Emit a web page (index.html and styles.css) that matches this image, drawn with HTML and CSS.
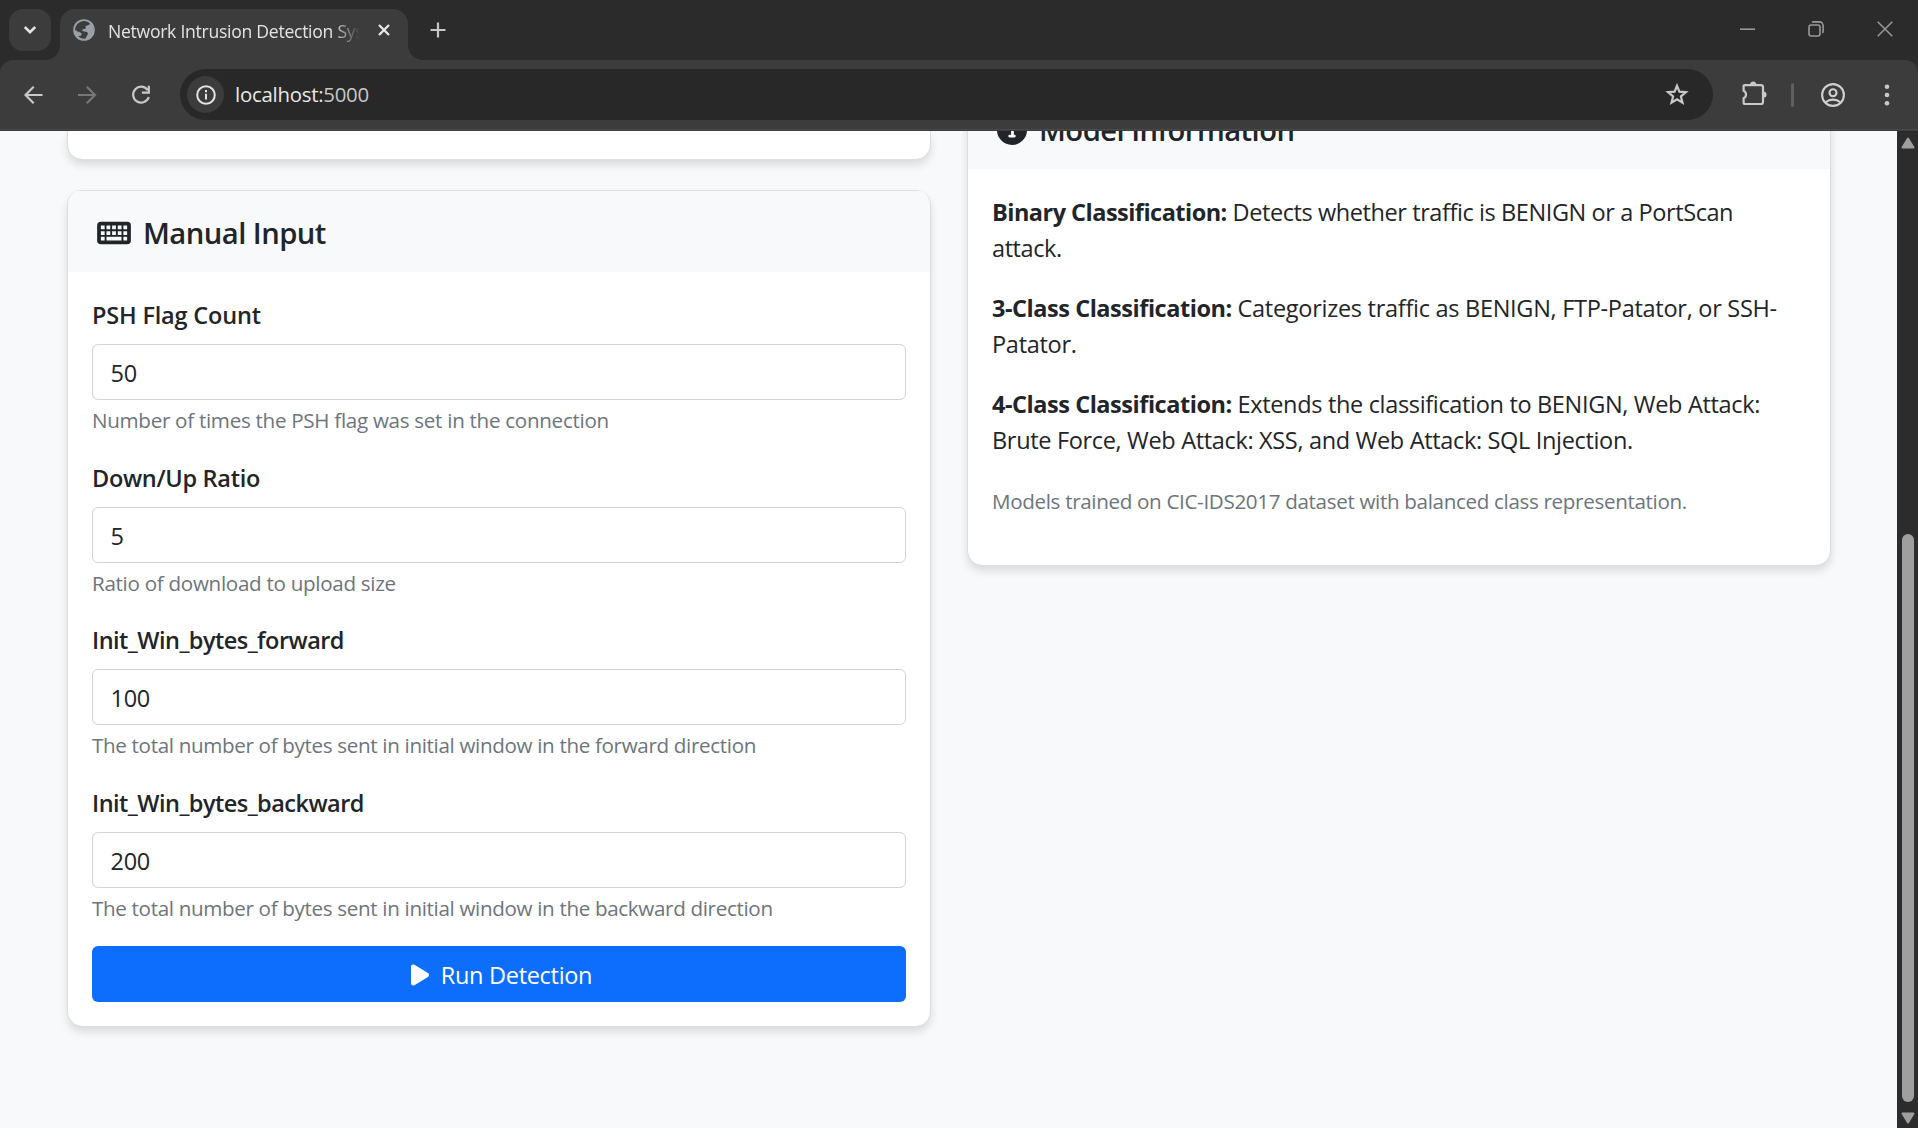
FILE: index.html
```html
<!DOCTYPE html>
<html lang="en">
<head>
<meta charset="utf-8">
<title>Network Intrusion Detection System</title>
<link rel="stylesheet" href="styles.css">
</head>
<body>
<div class="tabstrip">
  <div class="tab-search"><svg width="14" height="10" viewBox="0 0 14 10"><path d="M1.8 2 7 7.2 12.2 2" fill="none" stroke="#e3e3e3" stroke-width="2.6"/></svg></div>
  <div class="tab">
    <svg class="favicon" width="22" height="22" viewBox="0 0 22 22"><circle cx="11" cy="11" r="10.8" fill="#9aa0a6"/><path d="M9.5 2.2c2.9-.5 5.800.5 7.600 2.500-1 2-3.300 1.500-4.300 2.300-.8.8.5 1.700-.2 2.600-.8 1-2.500.2-3.300 1.200-.5.9.5 1.600 2 1.600 2 0 3.800.6 3.600 2.600-.2 1.500-1.700 1.800-2.300 4.600-2.800.4-5.800-.5-7.800-2.500 1.800.2 3.600-.3 3.900-1.800.2-1.600-1.600-1.900-3.300-2.600-1.400-.6-2.300-1.300-3.300-1.500C2 7 5 3 9.500 2.200z" fill="#3c3c3c"/></svg>
    <span class="tab-title">Network Intrusion Detection System</span>
    <svg class="tab-close" width="12" height="12" viewBox="0 0 12 12"><path d="M1 1 11 11M11 1 1 11" stroke="#e8e8e8" stroke-width="2.3"/></svg>
  </div>
  <svg class="new-tab" width="16" height="16" viewBox="0 0 16 16"><path d="M8 .5v15M.5 8h15" stroke="#c7c7c7" stroke-width="2.2"/></svg>
  <div class="window-controls">
    <svg width="15" height="15" viewBox="0 0 15 15"><path d="M0 7.200h15" stroke="#999" stroke-width="1.6"/></svg>
    <svg width="16" height="16" viewBox="0 0 16 16" fill="none" stroke="#999" stroke-width="1.6"><rect x="1" y="4" width="11" height="11" rx="2.200"/><path d="M4 1.500C4.500 1 5 .9 6 .9h5.500a3.600 3.600 0 0 1 3.600 3.600V10c0 1-.2 1.500-.8 2"/></svg>
    <svg width="16" height="16" viewBox="0 0 16 16"><path d="M.7.7l14.600 14.600M15.300.7.7 15.300" stroke="#999" stroke-width="1.500"/></svg>
  </div>
</div>
<div class="toolbar">
  <svg class="back" width="20" height="20" viewBox="0 0 20 20" fill="none" stroke="#c9c9c9" stroke-width="2.200"><path d="M18.500 10H2M9.700 1.800 1.500 10l8.200 8.200"/></svg>
  <svg class="forward" width="20" height="20" viewBox="0 0 20 20" fill="none" stroke="#777" stroke-width="2.200"><path d="M0 10h16.500M8.800 1.800 17 10l-8.200 8.200"/></svg>
  <svg class="reload" width="20" height="20" viewBox="0 0 20 20"><path d="M16.800 5.200A8 8 0 1 0 17.800 12" fill="none" stroke="#c9c9c9" stroke-width="2.200"/><path d="M18.900.8v8h-8V6.600h5.800V.8z" fill="#c9c9c9"/></svg>
  <div class="omnibox">
    <span class="site-info"><svg width="20" height="20" viewBox="0 0 20 20"><circle cx="10" cy="10" r="8.800" fill="none" stroke="#e3e3e3" stroke-width="2"/><path d="M10 8.800v5.700M10 5v2.200" stroke="#e3e3e3" stroke-width="2"/></svg></span>
    <span class="url"><span class="host">localhost:</span>5000</span>
    <svg class="star" width="24" height="23" viewBox="0 0 24 23"><path d="M12 2.800 14.400 8.700l6.500.5-5 4.200 1.600 6.300L12 16.300l-5.500 3.400 1.600-6.300-5-4.200 6.500-.5z" fill="none" stroke="#c9c9c9" stroke-width="2.200"/></svg>
  </div>
  <svg class="puzzle" width="25" height="25" viewBox="0 0 25 25"><path d="M2.600 4.100H19a2 2 0 0 1 2 2V21a2 2 0 0 1-2 2H3.100a1.500 1.500 0 0 1-1.500-1.500V17.300a4.200 4.200 0 0 0 0-7.600V5.100a1 1 0 0 1 1-1z" fill="none" stroke="#c9c9c9" stroke-width="2.200"/><path d="M8 4a3.200 3.600 0 0 1 6.400 0zM21 10.400a3.600 3.200 0 0 1 0 6.400z" fill="#c9c9c9"/></svg>
  <span class="divider"></span>
  <svg class="avatar" width="24" height="24" viewBox="0 0 24 24" fill="none" stroke="#d0d0d0" stroke-width="2.100"><circle cx="12" cy="12" r="10.900"/><circle cx="12" cy="9.700" r="3.500"/><path d="M4.600 19.300c4.300-3.600 10.500-3.600 14.800 0"/></svg>
  <svg class="menu" width="6" height="22" viewBox="0 0 6 22" fill="#c9c9c9"><circle cx="3" cy="2.800" r="2.300"/><circle cx="3" cy="11" r="2.300"/><circle cx="3" cy="19.200" r="2.300"/></svg>
</div>
<div class="viewport">
  <main class="page">
    <div class="column">
      <section class="card card-tail"></section>
      <section class="card">
        <h5 class="card-header"><svg width="34" height="30" viewBox="0 0 576 512"><path fill="#212529" fill-rule="evenodd" d="M64 64h448a64 64 0 0 1 64 64v256a64 64 0 0 1-64 64H64a64 64 0 0 1-64-64V128a64 64 0 0 1 64-64zM64 128v64h64v-64zM160 128v64h64v-64zM256 128v64h64v-64zM352 128v64h64v-64zM448 128v64h64v-64zM64 224v64h64v-64zM160 224v64h64v-64zM256 224v64h64v-64zM352 224v64h64v-64zM448 224v64h64v-64zM64 320v64h64v-64zM160 320v64h256v-64zM448 320v64h64v-64z"/></svg><span>Manual Input</span></h5>
        <form class="card-body">
          <div class="field"><label class="psh">PSH Flag Count</label><input type="text" value="50"><small>Number of times the PSH flag was set in the connection</small></div>
          <div class="field"><label class="ratio">Down/Up Ratio</label><input type="text" value="5"><small>Ratio of download to upload size</small></div>
          <div class="field"><label class="init">Init_Win_bytes_forward</label><input type="text" value="100"><small class="long">The total number of bytes sent in initial window in the forward direction</small></div>
          <div class="field"><label class="init">Init_Win_bytes_backward</label><input type="text" value="200"><small class="long">The total number of bytes sent in initial window in the backward direction</small></div>
          <button type="button" class="run"><svg width="18" height="24" viewBox="0 0 384 512"><path fill="#fff" d="M73 39c-14.800-9.100-33.400-9.400-48.500-.9S0 62.600 0 80V432c0 17.400 9.400 33.400 24.500 41.900s33.700 8.100 48.500-.9L361 297c14.300-8.700 23-24.200 23-41s-8.700-32.200-23-41L73 39z"/></svg>Run Detection</button>
        </form>
      </section>
    </div>
    <div class="column">
      <section class="card model-card">
        <h5 class="card-header"><svg width="30" height="30" viewBox="0 0 512 512"><path fill="#212529" d="M256 512A256 256 0 1 0 256 0a256 256 0 1 0 0 512zM216 336h24V272H216c-13.300 0-24-10.700-24-24s10.700-24 24-24h48c13.300 0 24 10.700 24 24v88h8c13.300 0 24 10.700 24 24s-10.700 24-24 24H216c-13.300 0-24-10.700-24-24s10.700-24 24-24zm40-208a32 32 0 1 1 0 64 32 32 0 1 1 0-64z"/></svg><span>Model Information</span></h5>
        <div class="card-body info">
          <p class="binary"><strong>Binary Classification:</strong> Detects whether traffic is BENIGN or a PortScan<br>attack.</p>
          <p class="three"><strong>3-Class Classification:</strong> Categorizes traffic as BENIGN, FTP-Patator, or SSH-<br>Patator.</p>
          <p><strong>4-Class Classification:</strong> Extends the classification to BENIGN, Web Attack:<br>Brute Force, Web Attack: XSS, and Web Attack: SQL Injection.</p>
          <p><small class="long">Models trained on CIC-IDS2017 dataset with balanced class representation.</small></p>
        </div>
      </section>
    </div>
  </main>
  <div class="scrollbar">
    <svg width="14" height="12" viewBox="0 0 14 12"><path d="M7 1.500 12.500 10.500h-11z" fill="#9f9f9f" stroke="#9f9f9f" stroke-width="2" stroke-linejoin="round"/></svg>
    <span class="thumb"></span>
    <svg width="14" height="12" viewBox="0 0 14 12"><path d="M7 10.500 12.500 1.500h-11z" fill="#9f9f9f" stroke="#9f9f9f" stroke-width="2" stroke-linejoin="round"/></svg>
  </div>
</div>
</body>
</html>
```
FILE: styles.css
```css
* { box-sizing: border-box; }

body {
  margin: 0;
  height: 1128px;
  display: flex;
  flex-direction: column;
  overflow: hidden;
  background: #2b2b2b;
  color: #212529;
  font: 23.5px/36px "Open Sans", "Noto Sans", sans-serif;
}

svg { display: block; flex: none; }

/* Browser window frame */
.tabstrip {
  flex: none;
  height: 60px;
  padding: 9px 25px 0 9px;
  display: flex;
  align-items: flex-start;
}

.tab-search {
  width: 42px;
  height: 42px;
  border-radius: 14px;
  background: #3c3c3c;
  display: flex;
  align-items: center;
  justify-content: center;
}

.tab {
  position: relative;
  width: 348px;
  height: 51px;
  margin-left: 9px;
  padding: 0 18px 9px 13px;
  display: flex;
  align-items: center;
  border-radius: 15px 15px 0 0;
  background: #3c3c3c;
}

.tab::before,
.tab::after {
  content: "";
  position: absolute;
  bottom: 0;
  width: 15px;
  height: 15px;
}

.tab::before {
  left: -15px;
  background: radial-gradient(circle at 0 0, transparent 14.5px, #3c3c3c 15.5px);
}

.tab::after {
  right: -15px;
  background: radial-gradient(circle at 100% 0, transparent 14.5px, #3c3c3c 15.5px);
}

.tab-title {
  width: 252px;
  margin-left: 13px;
  padding-top: 1px;
  overflow: hidden;
  white-space: nowrap;
  color: #e3e3e3;
  font-size: 17.6px;
  letter-spacing: -0.28px;
  -webkit-mask-image: linear-gradient(90deg, #000 225px, transparent 252px);
  mask-image: linear-gradient(90deg, #000 225px, transparent 252px);
}

.tab-close { margin-left: auto; }

.new-tab { margin: 13px 0 0 22px; }

.window-controls {
  margin: 12px 0 0 auto;
  display: flex;
  align-items: center;
  gap: 53px;
}

.toolbar {
  flex: none;
  height: 71px;
  padding: 0 28px 2px 24px;
  display: flex;
  align-items: center;
  border-radius: 13px 13px 0 0;
  background: linear-gradient(#4a4a4a, #4a4a4a) 0 69px / 100% 1px no-repeat, #3c3c3c;
}

.forward { margin-left: 34px; }
.reload { margin-left: 33px; }

.omnibox {
  width: 1533px;
  height: 51px;
  margin-left: 29px;
  padding: 0 24px 0 7px;
  display: flex;
  align-items: center;
  border-radius: 26px;
  background: #282828;
}

.site-info {
  width: 37px;
  height: 37px;
  display: flex;
  align-items: center;
  justify-content: center;
  border-radius: 50%;
  background: #3c3c3c;
}

.url {
  margin-left: 11px;
  padding-bottom: 2px;
  color: #c7c7c7;
  font-size: 20.4px;
  letter-spacing: -0.25px;
}

.host { color: #e8e8e8; }
.star { margin-left: auto; }
.puzzle { margin: 0 0 2px 29px; }

.divider {
  width: 3px;
  height: 24px;
  margin-left: 24px;
  border-radius: 2px;
  background: #5f5f5f;
}

.avatar { margin-left: 27px; }
.menu { margin-left: auto; }

/* Page content */
.viewport {
  flex: 1;
  min-height: 0;
  display: flex;
  overflow: hidden;
}

.page {
  flex: 1;
  padding: 0 66px 0 67px;
  display: flex;
  gap: 36px;
  overflow: hidden;
  background: #f8f9fb;
}

.column { width: 864px; }

.card {
  border: 0 solid #dcdddf;
  border-width: 0 1px;
  border-radius: 15px;
  background: #fff;
  box-shadow: 0 6px 9px rgba(0, 0, 0, 0.12);
}

.card-tail {
  height: 28px;
  margin-bottom: 31px;
  border-radius: 0 0 15px 15px;
}

.model-card { margin-top: -44px; }

.card-header {
  margin: 0;
  height: 82px;
  padding: 1px 29px 0;
  display: flex;
  align-items: center;
  gap: 12px;
  border-radius: 15px 15px 0 0;
  background: linear-gradient(#dcdddf, #dcdddf) 10px 0 / calc(100% - 20px) 1px no-repeat, #f8f9fb;
  font-size: 29.2px;
  font-weight: 600;
  letter-spacing: -0.54px;
}

.card-header svg { margin-top: 2px; }
.card-header span { padding-top: 2px; }

.card-body { padding: 24px; }

.field {
  height: 162.7px;
  display: flex;
  flex-direction: column;
}

label {
  height: 36px;
  padding-top: 1px;
  font-weight: 600;
}

.psh { letter-spacing: -0.18px; }
.ratio { letter-spacing: -0.3px; }
.init { letter-spacing: -0.53px; }

input {
  height: 56px;
  margin: 12px 0 5px;
  padding: 2px 17.5px 0;
  border: 1px solid #ced4da;
  border-radius: 6px;
  background: #fff;
  color: #212529;
  font: inherit;
  letter-spacing: -0.3px;
}

small {
  color: #6c757d;
  font-size: 20.6px;
  line-height: 31.5px;
  letter-spacing: -0.29px;
}

.long { letter-spacing: -0.33px; }

.run {
  width: 100%;
  height: 56px;
  margin: -1px 0 0;
  padding: 2px 0 0 5px;
  display: flex;
  align-items: center;
  justify-content: center;
  gap: 12px;
  border: 0;
  border-radius: 6px;
  background: #0d6efd;
  color: #fff;
  font: inherit;
  letter-spacing: -0.3px;
}

.info { padding: 25px 24px 23px; }

p {
  margin: 0 0 24px;
  letter-spacing: -0.33px;
  white-space: nowrap;
}

.binary { letter-spacing: -0.41px; }
.three { letter-spacing: -0.28px; }

strong { letter-spacing: -0.46px; }
.binary strong { letter-spacing: -0.52px; }

.scrollbar {
  width: 21px;
  padding: 6px 0 4px;
  display: flex;
  flex-direction: column;
  align-items: center;
  background: #2c2c2c;
}

.thumb {
  width: 12px;
  height: 568px;
  margin: auto 0 10px 1px;
  border-radius: 6px;
  background: #9f9f9f;
}
```
